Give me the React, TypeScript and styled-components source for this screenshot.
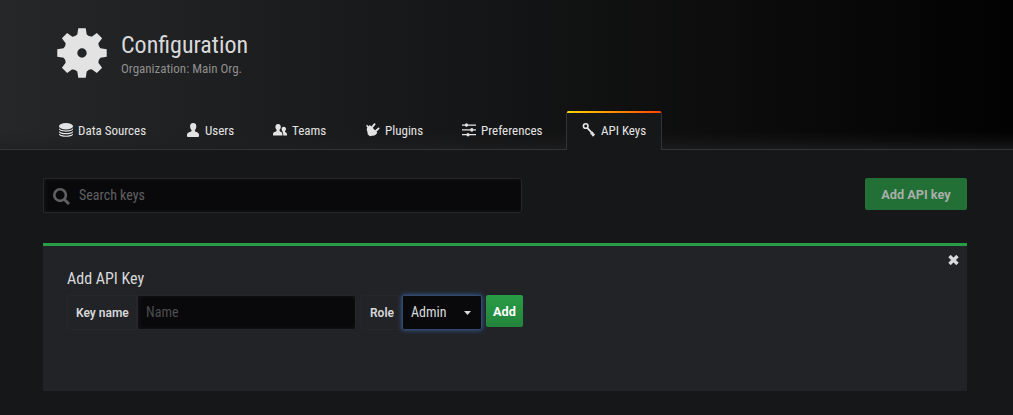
import React from "react";
import styled, { createGlobalStyle, css } from "styled-components";

const Global = createGlobalStyle`
  * { box-sizing: border-box; }
  body { margin: 0; background: #161719; }
`;

const Page = styled.div`
  width: 1013px;
  height: 415px;
  overflow: hidden;
  background: #161719;
  color: #d8d9da;
  font: 13px/20px Roboto, sans-serif;
`;

const Narrow = styled.span`
  font-family: "Roboto Condensed", Roboto, sans-serif;
  font-stretch: 75%;
  white-space: nowrap;
`;

const Header = styled.header`
  display: flex;
  flex-direction: column;
  justify-content: space-between;
  height: 150px;
  padding: 28px 43px 0;
  background:
    linear-gradient(to top, rgba(31, 31, 32, 0.75), rgba(31, 31, 32, 0.3) 8px, rgba(31, 31, 32, 0) 18px),
    linear-gradient(90deg, #262729, #020202);
  border-bottom: 1px solid #333436;
`;

const Brand = styled.div`
  display: flex;
  gap: 14px;
  padding-left: 14px;
`;

const Gear = styled.svg`
  width: 50px;
  height: 50px;
  fill: #e3e3e3;
`;

const Titles = styled.div`
  display: flex;
  flex-direction: column;
  padding-top: 4px;
`;

const Title = styled(Narrow)`
  font-size: 24px;
  line-height: 26px;
`;

const Subtitle = styled(Narrow)`
  font-size: 13px;
  line-height: 20px;
  padding-top: 1px;
  color: #8e8e8e;
`;

const Tabs = styled.nav`
  display: flex;
  height: 39px;
  margin-bottom: -1px;
`;

const Tab = styled.a<{ $w: number; $active?: boolean }>`
  display: flex;
  align-items: center;
  width: ${(p) => p.$w}px;
  height: 39px;
  padding: 0 0 1px 16px;
  gap: 5px;
  color: #e3e3e3;
  font-size: 13px;
  svg { width: 14px; height: 14px; flex: none; overflow: visible; }
  span { padding-top: 2px; }
  ${(p) =>
    p.$active &&
    css`
      padding-left: 15px;
      border: 1px solid #333436;
      border-width: 0 1px;
      border-radius: 2px 2px 0 0;
      background: linear-gradient(90deg, #ffd500, #ff4400) top / 100% 2px no-repeat, #161719;
    `}
`;

const Body = styled.main`
  padding: 28px 46px 0 43px;
`;

const Toolbar = styled.div`
  display: flex;
  justify-content: space-between;
  align-items: flex-start;
  height: 65px;
`;

const inputBox = css`
  background: #09090b;
  border: 1px solid #262628;
  box-shadow: inset 1px 0 5px rgba(150, 150, 150, 0.1);
`;

const Search = styled.div`
  ${inputBox}
  display: flex;
  align-items: center;
  gap: 9px;
  width: 479px;
  height: 35px;
  padding-left: 9px;
  border-radius: 0 3px 3px 0;
  color: #606062;
  font-size: 14px;
  svg { width: 17px; height: 17px; margin-top: 1px; }
  span { margin-top: -1px; }
`;

const Button = styled.button<{ $w: number; $dim?: boolean }>`
  width: ${(p) => p.$w}px;
  height: 32px;
  padding: 2px 0 0;
  border: 0;
  border-radius: 2px;
  color: #fff;
  font: 700 12.7px/20px Roboto, sans-serif;
  background: linear-gradient(#299c46, #23843b);
  ${(p) =>
    p.$dim &&
    css`
      background: #227035;
      color: #a9afaa;
    `}
`;

const Card = styled.section`
  display: flex;
  justify-content: space-between;
  height: 148px;
  padding: 0 8px 0 24px;
  border-top: 3px solid #299c46;
  background: #222327;
`;

const Close = styled.svg`
  width: 11px;
  height: 10px;
  margin-top: 9px;
  stroke: #d8d9da;
  stroke-width: 3.4;
`;

const FormTitle = styled(Narrow)`
  display: block;
  padding-top: 22px;
  height: 49px;
  font-size: 16px;
  line-height: 22px;
`;

const Row = styled.div`
  display: flex;
  align-items: flex-start;
`;

const Label = styled.label<{ $w: number }>`
  width: ${(p) => p.$w}px;
  height: 35px;
  padding-left: 8px;
  border: 1px solid #25272a;
  border-radius: 2px;
  font-weight: 600;
  font-size: 12px;
  line-height: 35px;
`;

const NameInput = styled.div`
  ${inputBox}
  width: 219px;
  height: 35px;
  margin-right: 5px;
  padding-left: 8px;
  border-radius: 0 3px 3px 0;
  font-size: 14px;
  line-height: 33px;
  color: #4c4d4f;
`;

const Select = styled.div`
  display: flex;
  align-items: center;
  justify-content: space-between;
  width: 80px;
  height: 35px;
  margin-right: 4px;
  padding: 0 10px 0 8px;
  background: #09090b;
  border: 1px solid #32496f;
  border-radius: 2px;
  box-shadow: 0 0 5px #37639f;
  font-size: 14px;
  span { margin-top: -1px; }
  svg { width: 7px; height: 4px; margin-top: 1px; fill: #d8d9da; }
`;

const gearPath = (() => {
  const pts: string[] = [];
  for (let i = 0; i < 8; i++) {
    const a = (i * Math.PI) / 4;
    const p = (r: number, d: number) =>
      `${(25 + r * Math.sin(a + d)).toFixed(2)} ${(25 - r * Math.cos(a + d)).toFixed(2)}`;
    pts.push(`${i ? "L" : "M"}${p(19, -0.25)}L${p(25, -0.15)}L${p(25, 0.15)}L${p(19, 0.25)}Q${p(17.6, 0.39)} ${p(19, 0.53)}`);
  }
  return pts.join("") + "ZM25 20.3a4.7 4.7 0 1 0 0 9.4a4.7 4.7 0 1 0 0-9.4Z";
})();

const I = ({ children }: { children: React.ReactNode }) => (
  <svg viewBox="0 0 14 14" fill="#e3e3e3">{children}</svg>
);

const Database = () => (
  <I>
    <ellipse cx="7" cy="3.2" rx="7" ry="3.2" />
    <path d="M0 5.2C2 8.1 12 8.1 14 5.2V6.3C13 9.4 1 9.4 0 6.3ZM0 8C2 10.8 12 10.8 14 8V9C13 12.1 1 12.1 0 9ZM0 10.6C2 13.3 12 13.3 14 10.6V11.4C13 14.6 1 14.6 0 11.4Z" />
  </I>
);
const User = () => (
  <I>
    <path d="M7.2 0C4.9 0 3.9 1.6 4.1 3.7C4.2 5.2 4.8 6.3 5.5 7V8.3C4.8 9.1 1 9 1 12V13Q1 14 2 14H12Q13 14 13 13V12C13 9 9.6 9.1 8.9 8.3V7C9.6 6.3 10.2 5.2 10.3 3.7C10.5 1.6 9.5 0 7.2 0Z" />
  </I>
);
const Users = () => (
  <I>
    <path d="M5.1 1C3.1 1 2.3 2.4 2.4 4.1C2.5 5.4 2.9 6.2 3.6 6.8V7.9C3.1 8.6 0 8.7 0 11.2V12.4H9.4V11.2C9.4 8.7 7.1 8.6 6.6 7.9V6.8C7.3 6.2 7.7 5.4 7.8 4.1C7.9 2.4 7.1 1 5.1 1Z" />
    <path d="M10.8 3.7C9.3 3.7 8.5 4.8 8.6 6.1C8.7 7.2 9 7.8 9.5 8.2V8.9C10 9.5 10.2 10.2 10.2 12.4H14V11.5C14 9.5 12.4 9.4 12 8.8V8.2C12.5 7.8 12.9 7.2 13 6.1C13.1 4.8 12.3 3.7 10.8 3.7Z" />
  </I>
);
const Plug = () => (
  <I>
    <path d="M.9 1.6L2.5 3.2L3.9 2.1L11.2 9.6C10.8 11.6 8.3 13.1 5.9 12.7L3.9 13.2L1.7 11.2L1.5 9C.5 7 .6 5.6 1.3 4.4L.3 3Z" />
    <path d="M5.9 4.3L8.6 1.2M9.6 8.3L12.6 5.4" stroke="#e3e3e3" strokeWidth="1.9" strokeLinecap="round" />
  </I>
);
const Sliders = () => (
  <I>
    <path d="M0 2.1H14M0 6.9H14M0 11.7H14" stroke="#e3e3e3" strokeWidth="1.3" />
    <ellipse cx="4.5" cy="2.1" rx="1.6" ry="1.8" /><ellipse cx="9.8" cy="6.9" rx="1.6" ry="1.8" /><ellipse cx="6" cy="11.7" rx="1.6" ry="1.8" />
  </I>
);
const Key = () => (
  <I>
    <circle cx="3.7" cy="3" r="2.3" fill="none" stroke="#e3e3e3" strokeWidth="1.6" />
    <path d="M5.3 4.8L11.7 11.8M8.7 11.4L11 9.1M10.3 13L12.5 10.8" stroke="#e3e3e3" strokeWidth="1.8" />
  </I>
);

const tabs = [
  { name: "Data Sources", w: 127, icon: <Database /> },
  { name: "Users", w: 87, icon: <User /> },
  { name: "Teams", w: 93, icon: <Users /> },
  { name: "Plugins", w: 96, icon: <Plug /> },
  { name: "Preferences", w: 120, icon: <Sliders /> },
  { name: "API Keys", w: 96, icon: <Key />, active: true },
];

export default function App() {
  return (
    <Page>
      <Global />
      <Header>
        <Brand>
          <Gear viewBox="0 0 50 50"><path fillRule="evenodd" d={gearPath} /></Gear>
          <Titles>
            <Title>Configuration</Title>
            <Subtitle>Organization: Main Org.</Subtitle>
          </Titles>
        </Brand>
        <Tabs>
          {tabs.map((t) => (
            <Tab key={t.name} $w={t.w} $active={t.active}>
              {t.icon}
              <Narrow>{t.name}</Narrow>
            </Tab>
          ))}
        </Tabs>
      </Header>
      <Body>
        <Toolbar>
          <Search>
            <svg viewBox="0 0 17 17" fill="none" stroke="#606062">
              <circle cx="7.1" cy="7.1" r="5.8" strokeWidth="2.6" />
              <path d="M11.2 11.2L16 16" strokeWidth="3" />
            </svg>
            <Narrow>Search keys</Narrow>
          </Search>
          <Button $w={102} $dim>Add API key</Button>
        </Toolbar>
        <Card>
          <div>
            <FormTitle>Add API Key</FormTitle>
            <Row>
              <Label $w={70}>Key name</Label>
              <NameInput><Narrow>Name</Narrow></NameInput>
              <Label $w={41}>Role</Label>
              <Select>
                <Narrow>Admin</Narrow>
                <svg viewBox="0 0 7 4"><path d="M0 0H7L3.5 4Z" /></svg>
              </Select>
              <Button $w={37}>Add</Button>
            </Row>
          </div>
          <Close viewBox="0 0 11 10"><path d="M1.5 1L9.5 9M9.5 1L1.5 9" /></Close>
        </Card>
      </Body>
    </Page>
  );
}
